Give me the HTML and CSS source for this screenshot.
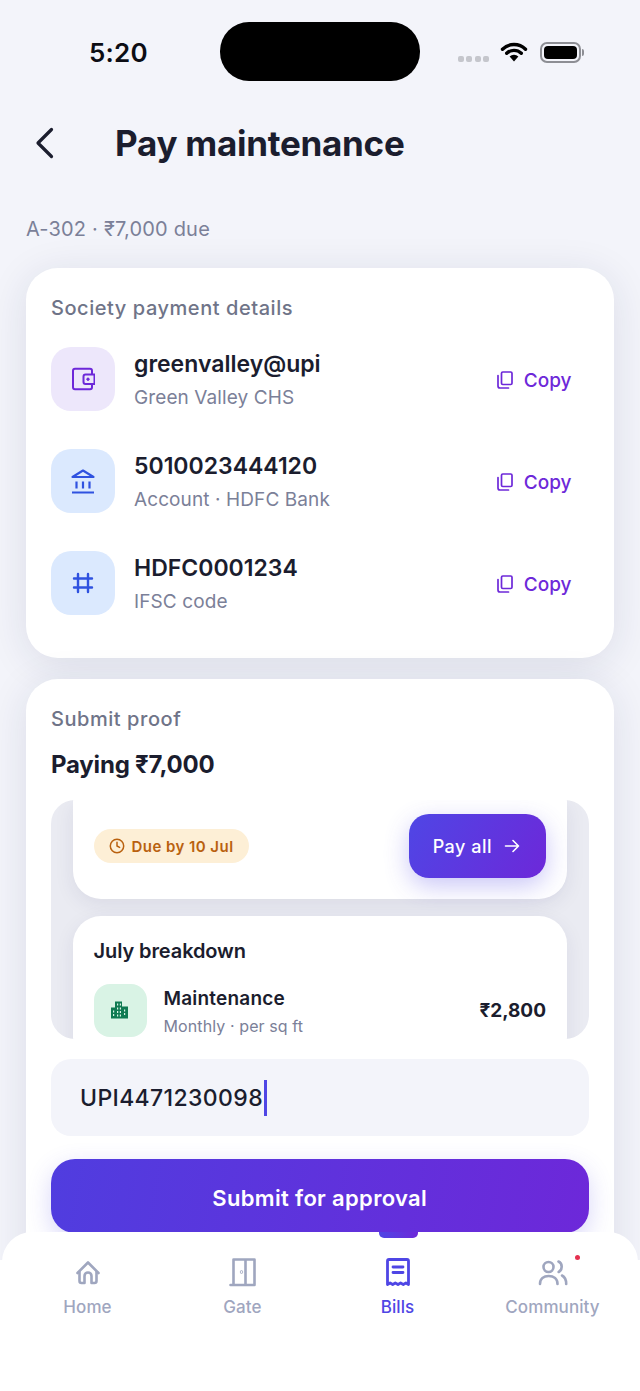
FILE: index.html
```html
<!DOCTYPE html>
<html lang="en">
<head>
<meta charset="utf-8">
<title>Pay maintenance</title>
<link rel="stylesheet" href="styles.css">
</head>
<body>
<div class="screen">
  <div class="island"></div>
  <header class="status">
    <span class="time">5:20</span>
    <div class="status-icons">
      <div class="signal"><i></i><i></i><i></i><i></i></div>
      <svg class="wifi" width="28" height="22" viewBox="0 0 28 22"><path d="M2.500 8.200a16.500 16.500 0 0 1 23 0M6.700 12.300a10.500 10.500 0 0 1 14.600 0" fill="none" stroke="#000" stroke-width="3.400" stroke-linecap="round"/><path d="M9.600 15.600a6.400 6.400 0 0 1 8.800 0L14 20.400z" fill="#000"/></svg>
      <div class="battery"><div class="battery-fill"></div></div>
      <div class="battery-cap"></div>
    </div>
  </header>

  <div class="topbar">
    <svg class="back" width="20" height="32" viewBox="0 0 20 32"><path d="M16.500 2.500 3 16l13.500 13.500" fill="none" stroke="#1b1d2e" stroke-width="3.200" stroke-linecap="round" stroke-linejoin="round"/></svg>
    <h1>Pay maintenance</h1>
  </div>
  <p class="due">A-302 · ₹7,000 due</p>

  <section class="card details">
    <h2 class="label">Society payment details</h2>
    <div class="row">
      <div class="tile tile-violet">
        <svg width="24" height="24" viewBox="0 0 24 24" fill="none" stroke="#6d28d9" stroke-width="2" stroke-linejoin="round"><rect x="2" y="1.800" width="19" height="20.400" rx="2"/><path d="M14.500 7.500h9v9.500h-9a2 2 0 0 1-2-2V9.500a2 2 0 0 1 2-2z" fill="#ede7fb"/><circle cx="17" cy="12.200" r="1.200" fill="#6d28d9" stroke-width="1"/></svg>
      </div>
      <div class="row-text"><div class="row-title">greenvalley@upi</div><div class="row-sub">Green Valley CHS</div></div>
      <div class="copy"><svg width="16" height="18" viewBox="0 0 16 18" fill="none" stroke="#6d28d9" stroke-width="1.700"><rect x="4.500" y="1" width="10.500" height="12.500" rx="1.300"/><path d="M1 4.500V15a2 2 0 0 0 2 2h8.500" stroke-linecap="round"/></svg><span>Copy</span></div>
    </div>
    <div class="row">
      <div class="tile tile-blue">
        <svg width="26" height="26" viewBox="0 0 26 26" fill="none" stroke="#2f52e0" stroke-width="2.200" stroke-linecap="round" stroke-linejoin="round"><path d="M2.500 9 13 2.500 23.500 9z"/><path d="M6.500 13.500v7M13 13.500v7M19.500 13.500v7M2 24.500h22" stroke-linecap="butt"/></svg>
      </div>
      <div class="row-text"><div class="row-title">5010023444120</div><div class="row-sub">Account · HDFC Bank</div></div>
      <div class="copy"><svg width="16" height="18" viewBox="0 0 16 18" fill="none" stroke="#6d28d9" stroke-width="1.700"><rect x="4.500" y="1" width="10.500" height="12.500" rx="1.300"/><path d="M1 4.500V15a2 2 0 0 0 2 2h8.500" stroke-linecap="round"/></svg><span>Copy</span></div>
    </div>
    <div class="row">
      <div class="tile tile-blue">
        <svg width="22" height="22" viewBox="0 0 22 22" fill="none" stroke="#2f52e0" stroke-width="2.400" stroke-linecap="round"><path d="M6 2v18M16 2v18M2 6.500h18M2 15.500h18"/></svg>
      </div>
      <div class="row-text"><div class="row-title">HDFC0001234</div><div class="row-sub">IFSC code</div></div>
      <div class="copy"><svg width="16" height="18" viewBox="0 0 16 18" fill="none" stroke="#6d28d9" stroke-width="1.700"><rect x="4.500" y="1" width="10.500" height="12.500" rx="1.300"/><path d="M1 4.500V15a2 2 0 0 0 2 2h8.500" stroke-linecap="round"/></svg><span>Copy</span></div>
    </div>
  </section>

  <section class="card proof">
    <h2 class="label">Submit proof</h2>
    <div class="paying">Paying ₹7,000</div>
    <div class="preview">
      <div class="mini-card mini-top">
        <div class="pill">
          <svg width="16" height="16" viewBox="0 0 16 16" fill="none" stroke="#b9610f" stroke-width="1.500" stroke-linecap="round" stroke-linejoin="round"><circle cx="8" cy="8" r="6.700"/><path d="M8 4.200V8l2.600 1.400"/></svg>
          <span>Due by 10 Jul</span>
        </div>
        <div class="pay-all"><span>Pay all</span><svg width="16" height="16" viewBox="0 0 16 16" fill="none" stroke="#fff" stroke-width="1.600" stroke-linecap="round" stroke-linejoin="round"><path d="M1.500 8h13M9 2.500 14.500 8 9 13.500"/></svg></div>
      </div>
      <div class="mini-card mini-bottom">
        <div class="mini-title">July breakdown</div>
        <div class="mini-row">
          <div class="mini-tile">
            <svg width="20" height="20" viewBox="0 0 20 20" fill="#0f7a52"><path d="M5 1.500h7v5h6v12H1v-11h4z"/><path d="M7 3.500h1.200v2H7zM9.800 3.500H11v2H9.800zM7 7.500h1.200v2H7zM9.800 7.500H11v2H9.800zM3 10.500h1.200v2H3zM7 11h1.200v2H7zM9.800 11H11v2H9.800zM14 9.500h1.200v2H14zM14 13h1.200v2H14zM3 14h1.200v2H3zM7 14.500h1.200v2H7zM9.800 14.500H11v2H9.800z" fill="#d9f3e5"/></svg>
          </div>
          <div class="mini-text"><div class="mini-name">Maintenance</div><div class="mini-sub">Monthly · per sq ft</div></div>
          <div class="mini-amount">₹2,800</div>
        </div>
      </div>
    </div>
    <div class="field"><span>UPI4471230098</span><i class="caret"></i></div>
    <button class="submit" type="button">Submit for approval</button>
  </section>

  <nav class="tabbar">
    <div class="tab">
      <svg width="28" height="30" viewBox="0 0 28 30" fill="none" stroke="#9fa6bf" stroke-width="2.600" stroke-linejoin="round" stroke-linecap="round"><path d="M3.500 16 14 5.500 24.500 16"/><path d="M5.500 15v9a2 2 0 0 0 2 2h3v-7a3.500 3.500 0 0 1 7 0v7h3a2 2 0 0 0 2-2v-9"/></svg>
      <span>Home</span>
    </div>
    <div class="tab">
      <svg width="28" height="30" viewBox="0 0 28 30" fill="none" stroke="#9fa6bf" stroke-width="2.600" stroke-linecap="round" stroke-linejoin="round"><path d="M4.500 28V2.500h21V28M1.500 28h24M16.500 2.500V28"/><circle cx="12.500" cy="15" r=".4"/></svg>
      <span>Gate</span>
    </div>
    <div class="tab tab-active">
      <i class="tab-marker"></i>
      <svg width="28" height="30" viewBox="0 0 28 30" fill="none" stroke="#4f46e5" stroke-width="2.800" stroke-linecap="round" stroke-linejoin="round"><path d="M3.500 27.500V4a1.500 1.500 0 0 1 1.500-1.500h18A1.500 1.500 0 0 1 24.500 4v23.500l-2.600-1.500-2.600 1.500-2.700-1.500-2.600 1.500-2.700-1.500-2.600 1.500-2.600-1.500z"/><path d="M9 10h10M9 15.500h10"/></svg>
      <span>Bills</span>
    </div>
    <div class="tab">
      <svg width="30" height="30" viewBox="0 0 30 30" fill="none" stroke="#9fa6bf" stroke-width="2.600" stroke-linecap="round"><circle cx="10.500" cy="10" r="5"/><path d="M2 27c0-5.200 3.700-8 8.700-8s8.800 2.800 8.800 8M20.500 4.500c2 .9 3.200 3 3.200 5.300s-1.200 4.200-3 5.200M24 18.500c2.500 1.300 4.200 4.500 4.200 8.500"/></svg>
      <span>Community</span>
      <i class="dot"></i>
    </div>
  </nav>
</div>
</body>
</html>
```

FILE: styles.css
```css
* { box-sizing: border-box; }
html, body { margin: 0; padding: 0; }
body { font-family: Inter, "Liberation Sans", sans-serif; color: #1b1d2e; background: #f3f4fa; }
h1, h2, p { margin: 0; }

.screen { position: relative; width: 640px; height: 1391px; overflow: hidden; background: #f3f4fa; }

.island { position: absolute; left: 220px; top: 22px; width: 200px; height: 59px; border-radius: 29px; background: #000; }

.status { display: flex; align-items: center; justify-content: space-between; height: 104px; padding: 0 56px 0 89px; }
.time { font-size: 26px; font-weight: 600; color: #0c0d14; letter-spacing: .2px; }
.status-icons { display: flex; align-items: center; }
.signal { display: flex; gap: 2.300px; margin-top: 13px; margin-right: 11px; }
.signal i { width: 6px; height: 6px; border-radius: 2px; background: #c5c6cc; }
.wifi { margin-right: 12px; }
.battery { width: 41px; height: 21px; border: 2px solid #8d8e94; border-radius: 7px; padding: 2px; }
.battery-fill { width: 100%; height: 100%; border-radius: 4px; background: #000; }
.battery-cap { width: 2px; height: 7px; margin-left: 1px; border-radius: 0 2px 2px 0; background: #8d8e94; }

.topbar { display: flex; align-items: center; height: 80px; padding: 0 0 2px 35px; }
h1 { margin-left: 60px; font-size: 35px; font-weight: 700; letter-spacing: -.27px; color: #1b1d2e; }
.due { margin: 30px 0 24px 26px; font-size: 20px; line-height: 30px; letter-spacing: .2px; color: #7b8098; }

.card { width: 588.500px; margin-left: 25.500px; background: #fff; border-radius: 32px; box-shadow: 0 6px 40px rgba(30, 34, 80, .11); }
.details { height: 390px; padding: 26px 25.500px 0; }
.proof { height: 660px; margin-top: 21px; padding: 26px 25.500px 0; }

.label { font-size: 20px; line-height: 28px; font-weight: 500; letter-spacing: .55px; color: #6f7488; }

.row { display: flex; align-items: center; height: 64px; margin-top: 38px; }
.details .label + .row { margin-top: 25px; }
.tile { display: flex; align-items: center; justify-content: center; flex: none; width: 64px; height: 64px; border-radius: 20px; }
.tile-violet { background: #ede7fb; }
.tile-blue { background: #dbe9fe; }
.row-text { flex: 1; margin-left: 19px; padding-top: 1px; }
.row-title { font-size: 23px; line-height: 36px; font-weight: 600; color: #1b1d2e; }
.row-sub { margin-top: 1px; font-size: 19px; line-height: 30px; letter-spacing: .1px; color: #7b8098; }
.copy { display: flex; align-items: center; gap: 11px; padding: 2px 17px 0 0; font-size: 19px; font-weight: 500; color: #6d28d9; }

.paying { margin-top: 15px; font-size: 24px; line-height: 34px; font-weight: 700; letter-spacing: -.2px; color: #1b1d2e; }

.preview { height: 239px; margin-top: 18px; padding: 0 21.500px; border-radius: 24px; overflow: hidden; background: #eaebf2; }
.mini-card { background: #fff; box-shadow: 0 6px 20px rgba(40, 44, 90, .08); }
.mini-top { display: flex; align-items: center; justify-content: space-between; height: 99px; padding: 0 21px 7px; border-radius: 0 0 28px 28px; }
.mini-bottom { height: 160px; margin-top: 17px; padding: 20px 21px 0; border-radius: 28px 28px 0 0; }

.pill { display: flex; align-items: center; gap: 7px; height: 34px; padding: 0 15px; border-radius: 17px; background: #fdefd6; font-size: 15px; font-weight: 600; letter-spacing: .45px; color: #b9610f; }
.pay-all { display: flex; align-items: center; gap: 12px; height: 64px; padding: 0 26px 0 24px; border-radius: 20px; background: linear-gradient(120deg, #4f46e5, #6d28d9); font-size: 18px; font-weight: 500; letter-spacing: .5px; color: #fff; box-shadow: 0 8px 24px rgba(79, 70, 229, .3); }

.mini-title { font-size: 20px; line-height: 30px; font-weight: 600; letter-spacing: -.1px; color: #1b1d2e; }
.mini-row { display: flex; align-items: center; margin-top: 15px; }
.mini-tile { display: flex; align-items: center; justify-content: center; flex: none; width: 53px; height: 53px; border-radius: 16px; background: #d9f3e5; }
.mini-text { flex: 1; margin-left: 17px; padding-top: 4px; }
.mini-name { font-size: 19px; line-height: 28px; font-weight: 600; letter-spacing: .2px; }
.mini-sub { font-size: 16px; line-height: 26px; letter-spacing: .1px; color: #7b8098; }
.mini-amount { font-size: 19px; font-weight: 700; }

.field { display: flex; align-items: center; height: 77px; margin-top: 20px; padding-left: 29px; border-radius: 20px; background: #f3f4fa; font-size: 23px; font-weight: 500; letter-spacing: .37px; color: #1b1d2e; }
.caret { width: 3px; height: 36px; margin-left: 1px; background: #4f46e5; }

.submit { display: block; width: 100%; height: 74px; margin-top: 23px; padding-top: 4px; border: 0; border-radius: 24px; background: linear-gradient(100deg, #503ddf, #6d28d9); font: 600 22px Inter, "Liberation Sans", sans-serif; letter-spacing: .33px; color: #fff; box-shadow: 0 8px 24px rgba(79, 70, 229, .22); }

.tabbar { position: absolute; left: 2px; right: 2px; bottom: 0; display: grid; grid-template-columns: repeat(4, 155px); justify-content: center; height: 159px; padding-top: 25px; border-radius: 30px 30px 0 0; background: #fff; }
.tabbar::after { content: ""; position: absolute; left: -2px; right: -2px; top: 28px; bottom: 0; z-index: 0; background: #fff; }
.tab { position: relative; z-index: 1; display: flex; flex-direction: column; align-items: center; height: 70px; font-size: 17px; font-weight: 500; letter-spacing: .1px; color: #9fa6bf; }
.tab svg { display: block; flex: none; }
.tab span { margin-top: 8px; line-height: 24px; }
.tab-active { color: #4f46e5; }
.tab-marker { position: absolute; left: 59px; top: -25px; width: 39px; height: 6px; border-radius: 0 0 5px 5px; background: linear-gradient(90deg, #4f46e5, #6d28d9); }
.dot { position: absolute; left: 100px; top: -2px; width: 5px; height: 5px; border-radius: 50%; background: #e5304f; }
```
